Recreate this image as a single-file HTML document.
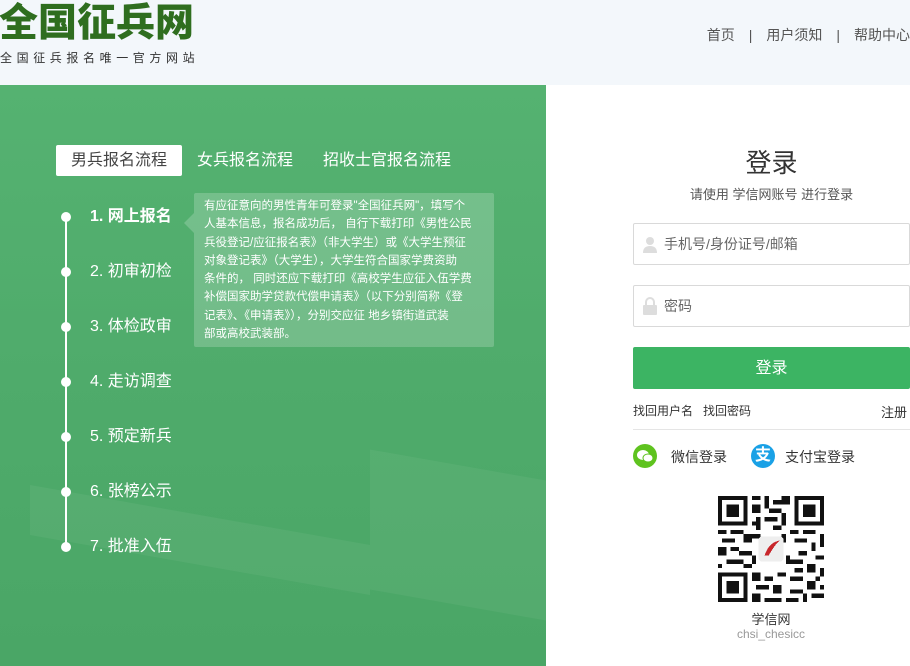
<!DOCTYPE html>
<html><head><meta charset="utf-8"><style>
*{margin:0;padding:0;box-sizing:border-box}
body{width:910px;height:666px;overflow:hidden;background:#fff;font-family:"Liberation Sans","Noto Sans CJK SC","Microsoft YaHei",sans-serif;position:relative}
.hdr{position:absolute;left:0;top:0;width:910px;height:85px;background:#f3f7fb}
.logo{position:absolute;left:-1px;top:2px;font-size:39px;font-weight:900;color:#2f6e1f;letter-spacing:0px;line-height:44px}
.slogan{position:absolute;left:0;top:49px;font-size:12px;color:#333;letter-spacing:4.6px}
.nav{position:absolute;right:0;top:25px;font-size:14px;color:#555}
.left{position:absolute;left:0;top:85px;width:546px;height:581px;background:linear-gradient(180deg,#55b271 0%,#4fab6b 50%,#4aa666 100%);overflow:hidden}
.wall{position:absolute;background:rgba(255,255,255,0.05)}
.tabs{position:absolute;top:60px;left:56px;font-size:16px;color:#fff}
.tab{position:absolute;top:0;height:31px;line-height:31px;white-space:nowrap}
.t1{left:0;width:126px;background:#fff;color:#444;text-align:center;border-radius:2px}
.line{position:absolute;left:65px;top:132px;width:2px;height:330px;background:#fff}
.dot{position:absolute;left:61px;width:10px;height:10px;border-radius:50%;background:#fff}
.step{position:absolute;left:90px;font-size:16px;color:#fff;line-height:20px}
.tip{position:absolute;left:194px;top:108px;width:300px;height:154px;background:rgba(255,255,255,0.2);padding:4px 0 0 10px;font-size:11.5px;line-height:18.3px;color:#fff;border-radius:2px;white-space:nowrap}
.tip:before{content:"";position:absolute;left:-10px;top:20px;border:10px solid transparent;border-left:0;border-right-color:rgba(255,255,255,0.2)}
.title{position:absolute;left:633px;width:277px;top:143px;text-align:center;font-size:26px;color:#333}
.sub{position:absolute;left:633px;width:277px;top:184px;text-align:center;font-size:13px;color:#555}
.inp{position:absolute;left:633px;width:277px;height:42px;border:1px solid #d9d9d9;border-radius:2px;font-size:14px;color:#666;line-height:40px;padding-left:30px}
.btn{position:absolute;left:633px;top:347px;width:277px;height:42px;background:#3cb463;border-radius:2px;color:#fff;text-align:center;line-height:44px;font-size:16px}
.small{position:absolute;top:402px;font-size:12px;color:#333}
.hr{position:absolute;left:633px;top:429px;width:277px;height:1px;background:#e5e5e5}
.soc{position:absolute;top:446px;font-size:14px;color:#333;line-height:22px}
.ic{position:absolute;top:444px;width:24px;height:24px;border-radius:50%}
</style></head><body>
<div class="hdr">
<div class="logo">全国征兵网</div>
<div class="slogan">全国征兵报名唯一官方网站</div>
<div class="nav">首页<span style="margin:0 14px">|</span>用户须知<span style="margin:0 14px">|</span>帮助中心</div>
</div>
<div class="left">
<div class="wall" style="left:370px;top:380px;width:176px;height:140px;transform:skewY(10deg)"></div>
<div class="wall" style="left:30px;top:430px;width:340px;height:50px;transform:skewY(10deg)"></div>
<div class="tabs">
<div class="tab t1">男兵报名流程</div>
<div class="tab" style="left:141px">女兵报名流程</div>
<div class="tab" style="left:267px">招收士官报名流程</div>
</div>
<div class="line"></div>
<div class="dot" style="top:127px"></div><div class="step" style="top:122px;font-weight:bold">1. 网上报名</div>
<div class="dot" style="top:182px"></div><div class="step" style="top:177px">2. 初审初检</div>
<div class="dot" style="top:237px"></div><div class="step" style="top:232px">3. 体检政审</div>
<div class="dot" style="top:292px"></div><div class="step" style="top:287px">4. 走访调查</div>
<div class="dot" style="top:347px"></div><div class="step" style="top:342px">5. 预定新兵</div>
<div class="dot" style="top:402px"></div><div class="step" style="top:397px">6. 张榜公示</div>
<div class="dot" style="top:457px"></div><div class="step" style="top:452px">7. 批准入伍</div>
<div class="tip">有应征意向的男性青年可登录"全国征兵网"，填写个<br>人基本信息，报名成功后， 自行下载打印《男性公民<br>兵役登记/应征报名表》（非大学生）或《大学生预征<br>对象登记表》（大学生），大学生符合国家学费资助<br>条件的， 同时还应下载打印《高校学生应征入伍学费<br>补偿国家助学贷款代偿申请表》（以下分别简称《登<br>记表》、《申请表》），分别交应征 地乡镇街道武装<br>部或高校武装部。</div>
</div>
<div class="title">登录</div>
<div class="sub">请使用 学信网账号 进行登录</div>
<div class="inp" style="top:223px">手机号/身份证号/邮箱
<svg style="position:absolute;left:8px;top:12px" width="16" height="17"><circle cx="8" cy="5" r="4" fill="#ddd"/><path d="M1 17 Q1 10 8 10 Q15 10 15 17Z" fill="#ddd"/></svg></div>
<div class="inp" style="top:285px">密码
<svg style="position:absolute;left:8px;top:11px" width="16" height="18"><path d="M4 8V5a4 4 0 0 1 8 0v3" stroke="#ddd" stroke-width="2" fill="none"/><rect x="1" y="8" width="14" height="10" rx="1" fill="#ddd"/></svg></div>
<div class="btn">登录</div>
<div class="small" style="left:633px">找回用户名&nbsp;&nbsp;&nbsp;找回密码</div>
<div class="small" style="left:881px;font-size:13px">注册</div>
<div class="hr"></div>
<div class="ic" style="left:633px;background:#5fc31f"><svg width="24" height="24"><ellipse cx="10" cy="11" rx="6" ry="5" fill="#fff"/><ellipse cx="15" cy="14" rx="5" ry="4" fill="#fff" stroke="#5fc31f"/></svg></div>
<div class="soc" style="left:671px">微信登录</div>
<div class="ic" style="left:751px;background:#1aa1e6;color:#fff;font-size:16px;text-align:center;line-height:24px;font-weight:bold">支</div>
<div class="soc" style="left:785px">支付宝登录</div>
<svg style="position:absolute;left:718px;top:496px" width="106" height="106" viewBox="0 0 25 25" shape-rendering="crispEdges">
<g fill="#111">
<path d="M0 0h7v7H0z M18 0h7v7h-7z M0 18h7v7H0z"/>
</g>
<g fill="#fff"><path d="M1 1h5v5H1z M19 1h5v5h-5z M1 19h5v5H1z"/></g>
<g fill="#111"><path d="M2 2h3v3H2z M20 2h3v3h-3z M2 20h3v3H2z"/>
<path d="M8 0h2v1H8z M11 0h1v3h-1z M13 1h2v1h-2z M15 0h2v2h-2z M8 2h2v2H8z M12 3h3v1h-3z M9 5h1v3H9z M11 5h3v1h-3z M15 4h1v3h-1z M8 6h1v1H8z M13 7h2v1h-2z
M0 8h2v1H0z M3 8h3v1H3z M6 9h2v2H6z M1 10h3v1H1z M0 12h2v2H0z M3 12h2v1H3z M5 13h3v1H5z M2 15h4v1H2z M0 16h1v1H0z M6 16h2v1H6z
M17 8h2v1h-2z M20 8h3v1h-3z M24 9h1v3h-1z M18 10h3v1h-3z M22 11h1v2h-1z M19 13h2v1h-2z M23 14h2v1h-2z M17 15h3v1h-3z M21 16h2v2h-2z M18 17h2v1h-2z M24 17h1v2h-1z
M8 18h2v2H8z M11 19h2v1h-2z M14 18h2v1h-2z M17 19h3v1h-3z M21 20h2v2h-2z M23 19h1v1h-1z M9 21h3v1H9z M13 21h2v2h-2z M17 22h3v1h-3z M8 23h2v2H8z M11 24h4v1h-4z M16 24h3v1h-3z M20 23h1v2h-1z M22 23h3v1h-3z M24 21h1v1h-1z
M8 9h2v1H8z M15 9h1v2h-1z M8 14h1v2H8z M16 14h1v2h-1z"/></g>
<rect x="9.5" y="9.5" width="6" height="6" rx="1" fill="#eee"/>
<path d="M11 14 Q12 11 14.5 10.5 Q13 12 12 14Z" fill="#c8262b"/>
</svg>
<div style="position:absolute;left:718px;width:106px;top:609px;text-align:center;font-size:13px;color:#333">学信网</div>
<div style="position:absolute;left:718px;width:106px;top:627px;text-align:center;font-size:12px;color:#999">chsi_chesicc</div>
</body></html>
